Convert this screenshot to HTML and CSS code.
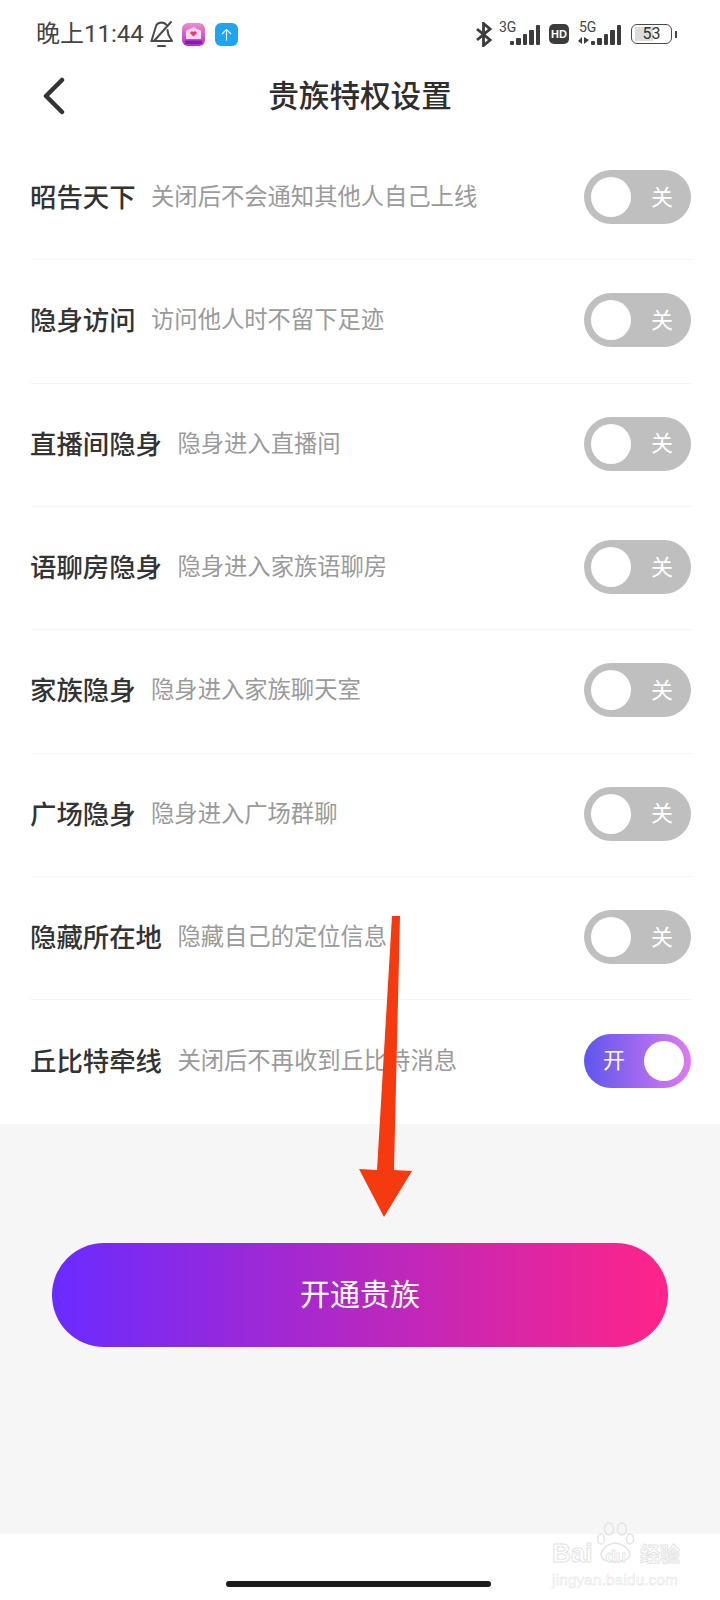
FILE: index.html
```html
<!DOCTYPE html>
<html lang="zh-CN">
<head>
  <meta charset="UTF-8">
  <title>贵族特权设置</title>
  <link rel="stylesheet" href="styles.css">
</head>
<body>
<div class="page">

  <!-- Status bar -->
  <div class="status">
    <span class="time">晚上11:44</span>
    <svg class="bell" width="24" height="28" viewBox="0 0 24 28" fill="none" stroke="#4a4a4a" stroke-width="2" stroke-linejoin="round" stroke-linecap="round">
      <path d="M1.500 21 6 6q1-3 5-3.500q4 0 6 3"/>
      <path d="M1.500 21H22l-3.500-6-1-5"/>
      <path d="M21 2 4 21"/>
      <path d="M8 26h7"/>
    </svg>
    <svg class="app-icon" width="23" height="23" viewBox="0 0 23 23">
      <defs>
        <linearGradient id="appPink" x1="0" y1="0" x2="0" y2="1">
          <stop offset="0" stop-color="#f08ccf"/>
          <stop offset="1" stop-color="#b02fd2"/>
        </linearGradient>
      </defs>
      <rect width="23" height="23" rx="6" fill="url(#appPink)"/>
      <path d="M4 7.500q4-1 7.500-3.500q3.500 2.500 7.500 3.500v8.500H4z" fill="#fbd9e8"/>
      <path d="M11.500 13.500 8.300 10.500a1.800 1.800 0 0 1 3.200-1.400a1.800 1.800 0 0 1 3.200 1.400z" fill="#e8387f"/>
      <rect x="3" y="17.500" width="17" height="3.500" rx="1" fill="#8a1ca8"/>
    </svg>
    <svg class="app-icon" width="23" height="23" viewBox="0 0 23 23" fill="none">
      <rect width="23" height="23" rx="6" fill="#1ea5f2"/>
      <path d="M11.500 17.500V6.500M7 11l4.500-4.500L16 11" stroke="#fff" stroke-width="1.100"/>
    </svg>
    <div class="status-right">
      <svg width="16" height="25" viewBox="0 0 16 25" fill="none" stroke="#3c3c3c" stroke-width="2.800">
        <path d="M1 7l13 11-6.500 5.500V1.500L14 7 1 18"/>
      </svg>
      <div class="net net-3g">
        <span class="net-label">3G</span>
        <div class="bars">
          <i class="b1"></i><i class="b2"></i><i class="b3"></i><i class="b4"></i><i class="b5"></i>
        </div>
      </div>
      <span class="hd">HD</span>
      <div class="net net-5g">
        <span class="net-label">5G</span>
        <div class="bars">
          <svg class="updown" width="11" height="9" viewBox="0 0 11 9" fill="#3c3c3c"><path d="M0 5l4-4v7zM6 1l5 3-5 4z"/></svg>
          <i class="b1"></i><i class="b2"></i><i class="b3"></i><i class="b4"></i><i class="b5"></i>
        </div>
      </div>
      <div class="battery">
        <div class="battery-body"><span class="battery-level"></span><span class="battery-num">53</span></div>
        <span class="battery-nub"></span>
      </div>
    </div>
  </div>

  <!-- Title bar -->
  <div class="nav">
    <svg class="back" width="24" height="38" viewBox="0 0 24 38" fill="none" stroke="#333" stroke-width="4.500" stroke-linecap="round" stroke-linejoin="round">
      <path d="M20 3 4 19l16 16"/>
    </svg>
    <h1 class="title">贵族特权设置</h1>
  </div>

  <div class="list">
    <div class="row">
      <span class="name">昭告天下</span>
      <span class="desc">关闭后不会通知其他人自己上线</span>
      <div class="toggle"><span class="knob"></span><span class="toggle-text">关</span></div>
    </div>
    <div class="row">
      <span class="name">隐身访问</span>
      <span class="desc">访问他人时不留下足迹</span>
      <div class="toggle"><span class="knob"></span><span class="toggle-text">关</span></div>
    </div>
    <div class="row">
      <span class="name">直播间隐身</span>
      <span class="desc">隐身进入直播间</span>
      <div class="toggle"><span class="knob"></span><span class="toggle-text">关</span></div>
    </div>
    <div class="row">
      <span class="name">语聊房隐身</span>
      <span class="desc">隐身进入家族语聊房</span>
      <div class="toggle"><span class="knob"></span><span class="toggle-text">关</span></div>
    </div>
    <div class="row">
      <span class="name">家族隐身</span>
      <span class="desc">隐身进入家族聊天室</span>
      <div class="toggle"><span class="knob"></span><span class="toggle-text">关</span></div>
    </div>
    <div class="row">
      <span class="name">广场隐身</span>
      <span class="desc">隐身进入广场群聊</span>
      <div class="toggle"><span class="knob"></span><span class="toggle-text">关</span></div>
    </div>
    <div class="row">
      <span class="name">隐藏所在地</span>
      <span class="desc">隐藏自己的定位信息</span>
      <div class="toggle"><span class="knob"></span><span class="toggle-text">关</span></div>
    </div>
    <div class="row">
      <span class="name">丘比特牵线</span>
      <span class="desc">关闭后不再收到丘比特消息</span>
      <div class="toggle on"><span class="knob"></span><span class="toggle-text">开</span></div>
    </div>
  </div>

  <div class="footer">
    <button class="open-btn" type="button">开通贵族</button>
  </div>

  <div class="home-area">
    <span class="home-bar"></span>
  </div>

  <!-- Red annotation arrow drawn over the page -->
  <svg class="arrow" width="60" height="304" viewBox="0 0 60 304">
    <path d="M36 0h8L38 254l18 1-28 46L3 253l18 1z" fill="#f53a10"/>
  </svg>

  <!-- Watermark -->
  <div class="watermark">
    <svg class="paw" width="38" height="42" viewBox="0 0 38 42" fill="none" stroke="#e4e4e4" stroke-width="1.500">
      <ellipse cx="12" cy="7" rx="4.500" ry="6"/>
      <ellipse cx="25" cy="7" rx="4.500" ry="6"/>
      <ellipse cx="4" cy="17" rx="3.500" ry="5"/>
      <ellipse cx="33" cy="17" rx="3.500" ry="5"/>
      <path d="M4 32q2-9 14-11q13 2 15 11q-1 8-15 8t-14-8z"/>
    </svg>
    <div class="wm-top"><span class="wm-bai">Bai</span><span class="wm-du">du</span><span class="wm-cn">经验</span></div>
    <div class="wm-url">jingyan.baidu.com</div>
  </div>

</div>
</body>
</html>
```

FILE: styles.css
```css
* {
  box-sizing: border-box;
}

body {
  margin: 0;
  background: #fff;
  font-family: "Noto Sans CJK SC", "Noto Sans", sans-serif;
}

.page {
  position: relative;
  width: 720px;
  height: 1600px;
  overflow: hidden;
  background: #fff;
}

/* status bar */
.status {
  display: flex;
  align-items: center;
  height: 68px;
  padding: 0 43px 0 36px;
}

.time {
  font-family: Roboto, "Noto Sans CJK SC", sans-serif;
  font-size: 24px;
  color: #444;
  line-height: 1;
}

.bell {
  margin-left: 6px;
  margin-right: 8px;
}

.app-icon {
  margin-right: 10px;
}

.status-right {
  display: flex;
  align-items: center;
  margin-left: auto;
}

.net {
  position: relative;
  height: 22px;
}

.net-label {
  position: absolute;
  top: -4px;
  left: 0;
  font-family: Roboto, sans-serif;
  font-size: 14px;
  line-height: 16px;
  color: #444;
}

.net-3g {
  width: 41px;
  margin-left: 7px;
}

.net-5g {
  width: 45px;
  margin-left: 7px;
}

.net-5g .net-label {
  left: 3px;
}

.bars {
  position: absolute;
  right: 0;
  bottom: 0;
  display: flex;
  align-items: flex-end;
  gap: 2px;
}

.bars i {
  display: block;
  width: 4.5px;
  background: #3c3c3c;
  border-radius: 1px;
}

.bars .b1 { height: 4px; }
.bars .b2 { height: 7px; }
.bars .b3 { height: 11px; }
.bars .b4 { height: 15px; }
.bars .b5 { height: 20px; }

.updown {
  margin-right: 0;
}

.hd {
  width: 20px;
  height: 20px;
  margin-left: 9px;
  background: #3c3c3c;
  border-radius: 5px;
  color: #fff;
  font-family: "Liberation Sans", sans-serif;
  font-size: 11px;
  font-weight: bold;
  line-height: 20px;
  text-align: center;
}

.battery {
  display: flex;
  align-items: center;
  margin-left: 10px;
}

.battery-body {
  position: relative;
  width: 41px;
  height: 20px;
  border: 1.500px solid #4a4a4a;
  border-radius: 6px;
}

.battery-level {
  position: absolute;
  top: 2px;
  bottom: 2px;
  left: 3px;
  width: 18px;
  background: #dcdcdc;
}

.battery-num {
  position: absolute;
  left: 0;
  right: 0;
  top: 0;
  font-family: Roboto, sans-serif;
  font-size: 16px;
  line-height: 17px;
  color: #333;
  text-align: center;
}

.battery-nub {
  width: 2px;
  height: 7px;
  margin-left: 3px;
  background: #444;
}

/* title bar */
.nav {
  display: grid;
  grid-template-columns: 1fr auto 1fr;
  align-items: center;
  height: 56px;
  margin-bottom: 13px;
  padding-left: 42px;
}

.back {
  display: block;
}

.title {
  margin: 0 0 0 -42px;
  padding-bottom: 4px;
  font-size: 30.600px;
  font-weight: 500;
  color: #2e2e2e;
  line-height: 1;
}

/* settings list */
.list {
  padding: 0 27px 0 30px;
}

.row {
  display: flex;
  align-items: center;
  height: 123.33px;
  padding-bottom: 2px;
  border-bottom: 1px solid #f6f6f6;
}

.row:last-child {
  border-bottom: none;
}

.name {
  padding-bottom: 2px;
  font-size: 26.400px;
  font-weight: 500;
  color: #333;
  line-height: 1;
}

.desc {
  margin-left: 15.500px;
  padding-bottom: 3px;
  font-size: 23.300px;
  color: #9a9a9a;
  line-height: 1;
}

.toggle {
  display: flex;
  align-items: center;
  justify-content: space-between;
  width: 107px;
  height: 54px;
  margin-left: auto;
  margin-right: 2px;
  padding: 0 18px 0 7px;
  border-radius: 27px;
  background: #bfbfbf;
}

.toggle.on {
  flex-direction: row-reverse;
  padding: 0 7px 0 19px;
  background: linear-gradient(90deg, #5e56ec, #dc7cf0);
}

.knob {
  width: 40px;
  height: 40px;
  border-radius: 50%;
  background: #fff;
}

.toggle-text {
  padding-bottom: 5px;
  font-size: 22px;
  color: #fff;
  line-height: 1;
}

/* bottom area */
.footer {
  height: 410.400px;
  padding: 119px 52px 0;
  background: #f6f6f6;
}

.open-btn {
  display: block;
  width: 616px;
  height: 104px;
  padding: 0 0 5px;
  border: none;
  border-radius: 52px;
  background: linear-gradient(90deg, #6a2bff, #ff2488);
  color: #fff;
  font-family: inherit;
  font-size: 30px;
}

.home-area {
  display: flex;
  justify-content: center;
  padding: 47px 4px 0 0;
}

.home-bar {
  width: 265px;
  height: 6px;
  border-radius: 3px;
  background: #1c1c1c;
}

.arrow {
  position: absolute;
  top: 916px;
  left: 356px;
}

/* baidu mark in the corner */
.watermark {
  position: absolute;
  top: 1522px;
  left: 552px;
  width: 128px;
  color: #fff;
  -webkit-text-stroke: 1px #e4e4e4;
}

.paw {
  position: absolute;
  top: 0;
  left: 45px;
}

.wm-top {
  position: relative;
  display: flex;
  align-items: baseline;
  margin-top: 16px;
  font-family: "Liberation Sans", sans-serif;
  font-size: 26px;
  line-height: 30px;
  font-weight: bold;
}

.wm-du {
  margin-left: 13px;
  font-size: 17px;
  -webkit-text-stroke: 0.800px #e4e4e4;
}

.wm-cn {
  margin-left: auto;
  font-family: "Noto Sans CJK SC", sans-serif;
  font-size: 20px;
}

.wm-url {
  position: relative;
  margin-top: -1px;
  font-family: "Liberation Sans", sans-serif;
  font-size: 15px;
  line-height: 18px;
  letter-spacing: 0.3px;
  -webkit-text-stroke: 0.500px #e4e4e4;
}
```
